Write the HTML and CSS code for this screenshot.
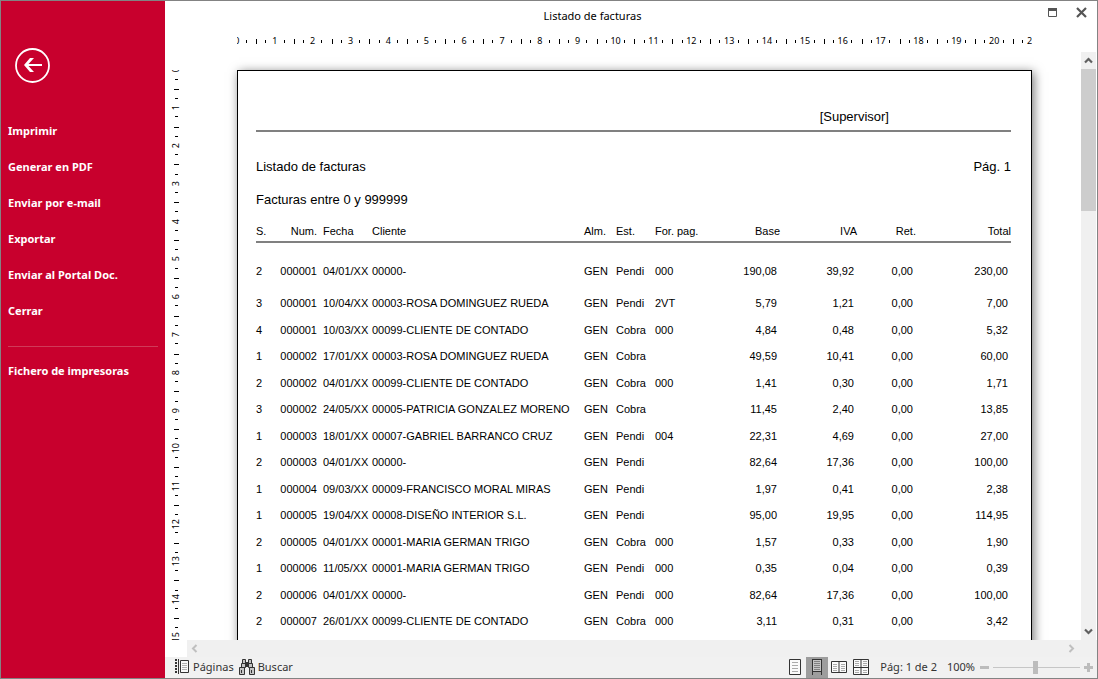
FILE: index.html
```html
<!DOCTYPE html>
<html lang="es">
<head>
<meta charset="utf-8">
<title>Listado de facturas</title>
<link rel="stylesheet" href="styles.css">
</head>
<body>
<div class="window">
  <nav class="sidebar">
    <button class="back" aria-label="Volver">
      <svg width="35" height="35" viewBox="0 0 35 35"><circle cx="17.500" cy="17.500" r="16.500" fill="none" stroke="#fff" stroke-width="1.800"/><path d="M9 17L15 10H19L13.500 16H27V18H13.500L19 24H15Z" fill="#fff"/></svg>
    </button>
    <button class="item">Imprimir</button>
    <button class="item">Generar en PDF</button>
    <button class="item">Enviar por e-mail</button>
    <button class="item">Exportar</button>
    <button class="item">Enviar al Portal Doc.</button>
    <button class="item">Cerrar</button>
    <hr class="divider">
    <button class="item">Fichero de impresoras</button>
  </nav>

  <main class="main">
    <header class="titlebar">
      <h1 class="title">Listado de facturas</h1>
      <div class="controls">
        <button class="control" aria-label="Maximizar"><svg width="9" height="9" viewBox="0 0 9 9"><path d="M.5.5h8v8h-8z" fill="none" stroke="#555"/><path d="M0 0h9v3H0z" fill="#555"/></svg></button>
        <button class="control" aria-label="Cerrar ventana"><svg width="11" height="11" viewBox="0 0 11 11"><path d="M1 1l9 9M10 1l-9 9" stroke="#555" stroke-width="2.200"/></svg></button>
      </div>
    </header>

    <div class="ruler-h">
      <div class="clip-h">
        <div class="scale-h">
          <span>0</span><span>1</span><span>2</span><span>3</span><span>4</span><span>5</span><span>6</span><span>7</span><span>8</span><span>9</span><span>10</span><span>11</span><span>12</span><span>13</span><span>14</span><span>15</span><span>16</span><span>17</span><span>18</span><span>19</span><span>20</span><span>21</span>
        </div>
      </div>
    </div>

    <div class="work">
      <div class="ruler-v">
        <div class="clip-v">
          <div class="scale-v">
            <span><b>0</b></span><span><b>1</b></span><span><b>2</b></span><span><b>3</b></span><span><b>4</b></span><span><b>5</b></span><span><b>6</b></span><span><b>7</b></span><span><b>8</b></span><span><b>9</b></span><span><b>10</b></span><span><b>11</b></span><span><b>12</b></span><span><b>13</b></span><span><b>14</b></span><span><b>15</b></span>
          </div>
        </div>
      </div>

      <div class="canvas">
        <article class="sheet">
          <div class="user">[Supervisor]</div>
          <div class="headline"><span>Listado de facturas</span><span>Pág. 1</span></div>
          <div class="subhead">Facturas entre 0 y 999999</div>
          <table class="invoices">
            <colgroup><col class="c-s"><col class="c-num"><col class="c-date"><col class="c-client"><col class="c-alm"><col class="c-est"><col class="c-pay"><col class="c-base"><col class="c-iva"><col class="c-ret"><col></colgroup>
            <thead>
              <tr><th>S.</th><th class="r">Num.</th><th class="date">Fecha</th><th>Cliente</th><th>Alm.</th><th>Est.</th><th>For. pag.</th><th class="r">Base</th><th class="r">IVA</th><th class="r">Ret.</th><th class="r">Total</th></tr>
            </thead>
            <tbody>
              <tr class="first"><td>2</td><td class="r">000001</td><td class="date">04/01/XX</td><td>00000-</td><td>GEN</td><td>Pendi</td><td>000</td><td class="n">190,08</td><td class="n">39,92</td><td class="n">0,00</td><td class="n">230,00</td></tr>
              <tr><td>3</td><td class="r">000001</td><td class="date">10/04/XX</td><td>00003-ROSA DOMINGUEZ RUEDA</td><td>GEN</td><td>Pendi</td><td>2VT</td><td class="n">5,79</td><td class="n">1,21</td><td class="n">0,00</td><td class="n">7,00</td></tr>
              <tr><td>4</td><td class="r">000001</td><td class="date">10/03/XX</td><td>00099-CLIENTE DE CONTADO</td><td>GEN</td><td>Cobra</td><td>000</td><td class="n">4,84</td><td class="n">0,48</td><td class="n">0,00</td><td class="n">5,32</td></tr>
              <tr><td>1</td><td class="r">000002</td><td class="date">17/01/XX</td><td>00003-ROSA DOMINGUEZ RUEDA</td><td>GEN</td><td>Cobra</td><td></td><td class="n">49,59</td><td class="n">10,41</td><td class="n">0,00</td><td class="n">60,00</td></tr>
              <tr><td>2</td><td class="r">000002</td><td class="date">04/01/XX</td><td>00099-CLIENTE DE CONTADO</td><td>GEN</td><td>Cobra</td><td>000</td><td class="n">1,41</td><td class="n">0,30</td><td class="n">0,00</td><td class="n">1,71</td></tr>
              <tr><td>3</td><td class="r">000002</td><td class="date">24/05/XX</td><td>00005-PATRICIA GONZALEZ MORENO</td><td>GEN</td><td>Cobra</td><td></td><td class="n">11,45</td><td class="n">2,40</td><td class="n">0,00</td><td class="n">13,85</td></tr>
              <tr><td>1</td><td class="r">000003</td><td class="date">18/01/XX</td><td>00007-GABRIEL BARRANCO CRUZ</td><td>GEN</td><td>Pendi</td><td>004</td><td class="n">22,31</td><td class="n">4,69</td><td class="n">0,00</td><td class="n">27,00</td></tr>
              <tr><td>2</td><td class="r">000003</td><td class="date">04/01/XX</td><td>00000-</td><td>GEN</td><td>Pendi</td><td></td><td class="n">82,64</td><td class="n">17,36</td><td class="n">0,00</td><td class="n">100,00</td></tr>
              <tr><td>1</td><td class="r">000004</td><td class="date">09/03/XX</td><td>00009-FRANCISCO MORAL MIRAS</td><td>GEN</td><td>Pendi</td><td></td><td class="n">1,97</td><td class="n">0,41</td><td class="n">0,00</td><td class="n">2,38</td></tr>
              <tr><td>1</td><td class="r">000005</td><td class="date">19/04/XX</td><td>00008-DISEÑO INTERIOR S.L.</td><td>GEN</td><td>Pendi</td><td></td><td class="n">95,00</td><td class="n">19,95</td><td class="n">0,00</td><td class="n">114,95</td></tr>
              <tr><td>2</td><td class="r">000005</td><td class="date">04/01/XX</td><td>00001-MARIA GERMAN TRIGO</td><td>GEN</td><td>Cobra</td><td>000</td><td class="n">1,57</td><td class="n">0,33</td><td class="n">0,00</td><td class="n">1,90</td></tr>
              <tr><td>1</td><td class="r">000006</td><td class="date">11/05/XX</td><td>00001-MARIA GERMAN TRIGO</td><td>GEN</td><td>Pendi</td><td>000</td><td class="n">0,35</td><td class="n">0,04</td><td class="n">0,00</td><td class="n">0,39</td></tr>
              <tr><td>2</td><td class="r">000006</td><td class="date">04/01/XX</td><td>00000-</td><td>GEN</td><td>Pendi</td><td>000</td><td class="n">82,64</td><td class="n">17,36</td><td class="n">0,00</td><td class="n">100,00</td></tr>
              <tr><td>2</td><td class="r">000007</td><td class="date">26/01/XX</td><td>00099-CLIENTE DE CONTADO</td><td>GEN</td><td>Cobra</td><td>000</td><td class="n">3,11</td><td class="n">0,31</td><td class="n">0,00</td><td class="n">3,42</td></tr>
            </tbody>
          </table>
        </article>
      </div>

      <div class="vscroll">
        <button class="arrow" aria-label="Subir"><svg width="9" height="7" viewBox="0 0 9 7"><path d="M1 5.500L4.500 2 8 5.500" fill="none" stroke="#606060" stroke-width="2.200"/></svg></button>
        <div class="thumb"></div>
        <button class="arrow" aria-label="Bajar"><svg width="9" height="7" viewBox="0 0 9 7"><path d="M1 1.500L4.500 5 8 1.500" fill="none" stroke="#606060" stroke-width="2.200"/></svg></button>
      </div>
    </div>

    <div class="hscroll">
      <button class="arrow" aria-label="Izquierda"><svg width="7" height="9" viewBox="0 0 7 9"><path d="M5.500 1L2 4.500 5.500 8" fill="none" stroke="#bfbfbf" stroke-width="2"/></svg></button>
      <button class="arrow" aria-label="Derecha"><svg width="7" height="9" viewBox="0 0 7 9"><path d="M1.500 1L5 4.500 1.500 8" fill="none" stroke="#bfbfbf" stroke-width="2"/></svg></button>
    </div>

    <footer class="status">
      <button class="tool"><svg width="14" height="15" viewBox="0 0 14 15"><path d="M0 0h2v2H0zM0 3h2v2H0zM0 6h2v2H0zM0 9h2v2H0zM0 12h2v2H0zM3 0h1v15H3z" fill="#333"/><path d="M5.500 1.500h8v12h-8z" fill="#f8f8f8" stroke="#333"/><path d="M7 4.500h5M7 6.500h5M7 8.500h5M7 10.500h5" stroke="#b0b0b0"/></svg>Páginas</button>
      <button class="tool find"><svg width="16" height="16" viewBox="0 0 16 16"><g fill="#c4c4c4" stroke="#333"><path d="M3.500.5h3v4h-3zM9.500.5h3v4h-3z"/><path d="M2.500 4.500h4v4h-4zM9.500 4.500h4v4h-4z"/><path d="M.5 8.500h5v7h-5zM10.500 8.500h5v7h-5z"/></g><path d="M6 3h4v2H6zM7 5h2v3H7zM2 11h1v3H2zM12 11h1v3h-1z" fill="#333"/></svg>Buscar</button>
      <div class="views">
        <button class="view" aria-label="Una página"><svg width="12" height="16" viewBox="0 0 12 16"><path d="M.5.5h11v15H.5z" fill="#fafafa" stroke="#333"/><path d="M3 3.500h6M3 6.500h6M3 9.500h6M3 12.500h6" stroke="#aaa"/></svg></button>
        <button class="view selected" aria-label="Página continua"><svg width="10" height="16" viewBox="0 0 10 16"><path d="M1 1h8v11H1z" fill="#c4c4c4"/><path d="M2 2.500h6M2 4.500h6M2 6.500h6M2 8.500h6M2 10.500h6" stroke="#808080"/><path d="M.5 0v16M9.500 0v16M0 .5h10M0 12.500h10" fill="none" stroke="#333"/></svg></button>
        <button class="view" aria-label="Dos páginas"><svg width="16" height="12" viewBox="0 0 16 12"><path d="M.5.5h15v11H.5zM8 0v12" fill="#fafafa" stroke="#333"/><path d="M2 3.500h4M2 5.500h4M2 7.500h4M2 9.500h4M10 3.500h4M10 5.500h4M10 7.500h4M10 9.500h4" stroke="#aaa"/></svg></button>
        <button class="view" aria-label="Cuatro páginas"><svg width="16" height="16" viewBox="0 0 16 16"><path d="M.5.5h15v15H.5zM8 0v16M0 8.500h16" fill="#fafafa" stroke="#333"/><path d="M2 2.500h4M2 4.500h4M2 6.500h4M2 11.500h4M2 13.500h4M10 2.500h4M10 4.500h4M10 6.500h4M10 11.500h4M10 13.500h4" stroke="#aaa"/></svg></button>
      </div>
      <span class="pages">Pág: 1 de 2</span>
      <label class="percent" for="zoom">100%</label>
      <button class="step" aria-label="Reducir"><svg width="9" height="9" viewBox="0 0 9 9"><path d="M0 3h9v3H0z" fill="#bcbcbc"/></svg></button>
      <input class="slider" id="zoom" type="range" min="0" max="100" value="49">
      <button class="step" aria-label="Ampliar"><svg width="9" height="9" viewBox="0 0 9 9"><path d="M0 3h9v3H0zM3 0h3v9H3z" fill="#bcbcbc"/></svg></button>
    </footer>
  </main>
</div>
</body>
</html>
```
FILE: styles.css
```css
* {
  box-sizing: border-box;
}

body {
  margin: 0;
  font-family: "Noto Sans", "Open Sans", sans-serif;
  font-size: 11px;
  color: #333;
}

button {
  margin: 0;
  padding: 0;
  border: 0;
  background: none;
  color: inherit;
  font: inherit;
}

svg {
  display: block;
  flex: none;
}

.window {
  display: flex;
  height: 100vh;
  border: 1px solid #838383;
  background: #fff;
  overflow: hidden;
}

.sidebar {
  display: flex;
  flex: none;
  flex-direction: column;
  width: 164px;
  padding: 47px 7px 0;
  background: #c8002d;
  color: #fff;
}

.back {
  align-self: flex-start;
  margin: 0 0 29px 7px;
}

.item {
  height: 36px;
  font-size: 11px;
  font-weight: 700;
  text-align: left;
}

.divider {
  width: 100%;
  height: 1px;
  margin: 18px 0 5px;
  border: 0;
  background: #d03a58;
}

.main {
  display: flex;
  flex: 1;
  flex-direction: column;
  min-width: 0;
}

.titlebar {
  display: flex;
  flex: none;
  height: 30px;
}

.title {
  flex: 1;
  margin: 0;
  font-size: 11px;
  font-weight: 400;
  line-height: 30px;
  text-align: center;
  color: #000;
}

.controls {
  display: flex;
  justify-content: space-between;
  align-items: center;
  width: 77px;
  height: 22px;
  padding: 0 10px 0 28px;
}

/* Rulers: one cell per centimetre, the number in the middle */
.ruler-h {
  display: flex;
  flex: none;
  justify-content: center;
  height: 21px;
  padding: 3px 16px 0 23px;
}

.clip-h {
  width: 795px;
  height: 14px;
  overflow: hidden;
}

.scale-h {
  display: grid;
  grid-template-columns: repeat(22, 1fr);
  width: calc(100% + 38px);
  height: 14px;
  margin-left: -19px;
}

.scale-h span {
  background:
    linear-gradient(#000, #000) 0 50% / 1px 5px no-repeat,
    linear-gradient(#000, #000) 25% 50% / 1px 3px no-repeat,
    linear-gradient(#000, #000) 75% 50% / 1px 3px no-repeat;
  font-size: 9px;
  line-height: 14px;
  text-align: center;
  color: #000;
}

.work {
  display: flex;
  flex: 1;
  min-height: 0;
}

.ruler-v {
  flex: none;
  width: 22px;
  padding: 18px 4px 0;
}

.clip-v {
  height: 100%;
  overflow: hidden;
}

.scale-v {
  display: grid;
  grid-template-rows: repeat(16, 1fr);
  height: 605px;
  margin-top: -19px;
}

.scale-v span {
  display: flex;
  justify-content: center;
  align-items: center;
  background:
    linear-gradient(#000, #000) 50% 0 / 5px 1px no-repeat,
    linear-gradient(#000, #000) 50% 25% / 3px 1px no-repeat,
    linear-gradient(#000, #000) 50% 75% / 3px 1px no-repeat;
}

.scale-v b {
  font-size: 9px;
  font-weight: 400;
  line-height: 14px;
  color: #000;
  writing-mode: vertical-rl;
  transform: rotate(180deg);
}

.canvas {
  display: flex;
  flex: 1;
  justify-content: center;
  min-width: 0;
  padding: 18px 0 0 1px;
  overflow: hidden;
}

.sheet {
  flex: none;
  width: 795px;
  height: 1123px;
  padding: 38px 20px 0 18px;
  border: 1px solid #000;
  background: #fff;
  box-shadow: 2px 2px 10px #777;
  font-family: "Liberation Sans", Arial, sans-serif;
  font-size: 13px;
  line-height: 16px;
  color: #000;
}

.user {
  padding: 0 122px 5px 0;
  border-bottom: 2px solid #808080;
  text-align: right;
}

.headline {
  display: flex;
  justify-content: space-between;
  margin-top: 27px;
}

.subhead {
  margin: 17px 0 15px;
}

.invoices {
  width: 100%;
  border-collapse: collapse;
  table-layout: fixed;
  font-size: 11px;
  white-space: nowrap;
}

.invoices th,
.invoices td {
  padding: 0;
  text-align: left;
  font-weight: 400;
}

.invoices th {
  height: 19px;
  padding-bottom: 2px;
  border-bottom: 2px solid #808080;
}

.invoices td {
  height: 27px;
}

.invoices tr:nth-child(even) td {
  height: 26px;
}

.invoices .first td {
  height: 48px;
  padding-top: 8px;
}

.invoices .r {
  text-align: right;
}

.invoices .n {
  padding-right: 3px;
  text-align: right;
}

.invoices .date {
  padding-left: 6px;
}

.c-s { width: 24px; }
.c-num { width: 37px; }
.c-date { width: 55px; }
.c-client { width: 212px; }
.c-alm { width: 32px; }
.c-est { width: 39px; }
.c-pay { width: 60px; }
.c-base { width: 65px; }
.c-iva { width: 77px; }
.c-ret { width: 59px; }

.vscroll {
  display: flex;
  flex: none;
  flex-direction: column;
  width: 16px;
  border-right: 1px solid #fff;
  background: #f0f0f0;
}

.arrow {
  display: flex;
  flex: none;
  justify-content: center;
  align-items: center;
  width: 15px;
  height: 17px;
}

.thumb {
  height: 142px;
  margin-bottom: auto;
  background: #cdcdcd;
}

.hscroll {
  display: flex;
  flex: none;
  justify-content: space-between;
  height: 17px;
  margin-left: 22px;
  padding-right: 18px;
  background: #f0f0f0;
}

.status {
  display: flex;
  flex: none;
  align-items: center;
  height: 21px;
  padding: 0 4px 0 10px;
  background: #f1f1f1;
}

.tool {
  display: flex;
  align-items: center;
  gap: 4px;
  padding-bottom: 2px;
}

.find {
  gap: 3px;
  margin-left: 5px;
}

.views {
  display: flex;
  height: 100%;
  margin-left: auto;
}

.view {
  display: flex;
  justify-content: center;
  align-items: center;
  width: 22px;
  padding-bottom: 1px;
}

.selected {
  background: #9d9d9d;
}

.pages {
  margin: 0 10px 0 8px;
  padding-bottom: 2px;
}

.percent {
  margin-right: 5px;
  padding-bottom: 2px;
}

.slider {
  width: 87px;
  height: 13px;
  margin: 0 4px;
  appearance: none;
  background: linear-gradient(#c6c6c6, #c6c6c6) 0 50% / 100% 1px no-repeat;
}

.slider::-webkit-slider-thumb {
  width: 5px;
  height: 13px;
  appearance: none;
  background: #bcbcbc;
}
```
